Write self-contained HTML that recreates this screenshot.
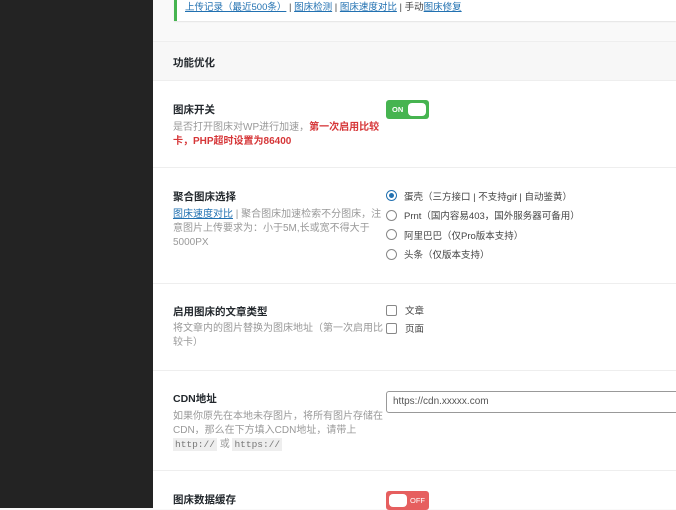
<!DOCTYPE html><html><head><meta charset="utf-8"><style>
body{margin:0;width:676px;height:508px;overflow:hidden;background:#f9f9f9;font-family:"Liberation Sans","Noto Sans CJK SC",sans-serif;position:relative}
.a{position:absolute}
.sb{left:0;top:0;width:153px;height:508px;background:#232323}
.t{font-size:10.5px;color:#23282d;font-weight:bold}
.d{font-size:10px;color:#999;line-height:14px}
a{color:#2271b1;text-decoration:underline}
.row{left:153px;width:523px;background:#fff;border-top:1px solid #eee}
.r{font-size:9.5px;color:#444;display:flex;align-items:center;height:19.5px}
.rd{width:11px;height:11px;border:1px solid #888;border-radius:50%;margin-right:7px;box-sizing:border-box}
.cb{width:11px;height:11px;border:1px solid #888;border-radius:2px;margin-right:8px;box-sizing:border-box}
code{background:#eee;font-family:"Liberation Mono",monospace;font-size:9.5px;color:#777;padding:1px 2px}
</style></head><body>
<div class="a sb"></div>
<div class="a" style="left:174px;top:0;width:502px;height:21px;background:#fff;border-left:3px solid #46b450;font-size:9.5px;color:#444;line-height:15px;padding-left:8px;box-sizing:border-box;box-shadow:0 1px 1px #e5e5e5"><a>上传记录（最近500条）</a> | <a>图床检测</a> | <a>图床速度对比</a> | 手动<a>图床修复</a></div>
<div class="a" style="left:153px;top:41px;width:523px;height:39px;background:#f7f7f7;border-top:1px solid #eee"></div>
<div class="a t" style="left:173px;top:55px">功能优化</div>
<div class="a row" style="top:80px;height:87px"></div>
<div class="a t" style="left:173px;top:102px">图床开关</div>
<div class="a d" style="left:173px;top:121px;width:214px">是否打开图床对WP进行加速，<b style="color:#d63638">第一次启用比较卡，PHP超时设置为86400</b></div>
<div class="a" style="left:386px;top:100px;width:43px;height:19px;background:#46b450;border-radius:3px"><span class="a" style="left:6px;top:5px;color:#fff;font-size:7.5px;font-weight:bold">ON</span><span class="a" style="left:22px;top:3px;width:18px;height:13px;background:#fff;border-radius:4px"></span></div>
<div class="a row" style="top:167px;height:116px"></div>
<div class="a t" style="left:173px;top:189px">聚合图床选择</div>
<div class="a d" style="left:173px;top:208px;width:214px"><a>图床速度对比</a> | 聚合图床加速检索不分图床，注意图片上传要求为：小于5M,长或宽不得大于5000PX</div>
<div class="a" style="left:386px;top:186px">
<div class="r"><span class="rd" style="border-color:#2271b1;background:radial-gradient(#2271b1 35%,#fff 42%)"></span>蛋壳（三方接口 | 不支持gif | 自动鉴黄）</div>
<div class="r"><span class="rd"></span>Prnt（国内容易403，国外服务器可备用）</div>
<div class="r"><span class="rd"></span>阿里巴巴（仅Pro版本支持）</div>
<div class="r"><span class="rd"></span>头条（仅版本支持）</div></div>
<div class="a row" style="top:283px;height:87px"></div>
<div class="a t" style="left:173px;top:304px">启用图床的文章类型</div>
<div class="a d" style="left:173px;top:322px;width:214px">将文章内的图片替换为图床地址（第一次启用比较卡）</div>
<div class="a" style="left:386px;top:301px"><div class="r" style="height:18px"><span class="cb"></span>文章</div><div class="r" style="height:18px"><span class="cb"></span>页面</div></div>
<div class="a row" style="top:370px;height:100px"></div>
<div class="a t" style="left:173px;top:391px">CDN地址</div>
<div class="a d" style="left:173px;top:410px;width:214px">如果你原先在本地未存图片，将所有图片存储在CDN，那么在下方填入CDN地址，请带上 <code>http://</code> 或 <code>https://</code></div>
<div class="a" style="left:386px;top:391px;width:300px;height:22px;border:1px solid #999;border-radius:3px;font-size:10px;color:#555;line-height:20px;padding-left:6px;box-sizing:border-box;background:#fff">https://cdn.xxxxx.com</div>
<div class="a row" style="top:470px;height:38px"></div>
<div class="a t" style="left:173px;top:492px">图床数据缓存</div>
<div class="a" style="left:386px;top:491px;width:43px;height:19px;background:#e65f5f;border-radius:3px"><span class="a" style="left:3px;top:3px;width:18px;height:13px;background:#fff;border-radius:4px"></span><span class="a" style="left:24px;top:5px;color:#fff;font-size:7.5px">OFF</span></div>
</body></html>
